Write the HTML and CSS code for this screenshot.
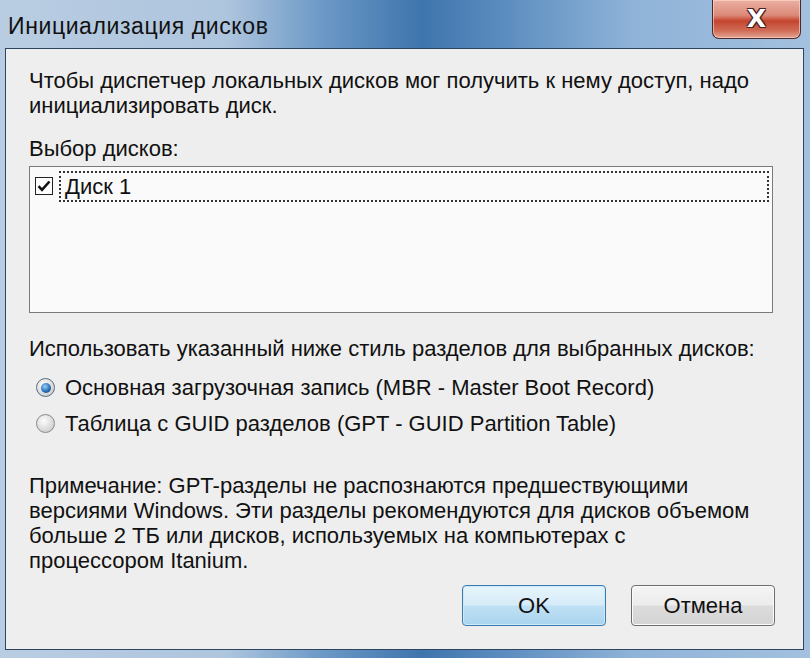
FILE: index.html
```html
<!DOCTYPE html>
<html lang="ru">
<head>
<meta charset="utf-8">
<title>Инициализация дисков</title>
<link rel="stylesheet" href="styles.css">
</head>
<body>
<div class="window">
  <div class="titlebar">
    <div class="title">Инициализация дисков</div>
    <div class="close"><span class="close-x">X</span></div>
  </div>
  <div class="client">
    <p class="intro">Чтобы диспетчер локальных дисков мог получить к нему доступ, надо<br>инициализировать диск.</p>
    <div class="label">Выбор дисков:</div>
    <div class="listbox">
      <div class="item">
        <span class="checkbox">
          <svg width="14" height="14" viewBox="0 0 14 14"><path d="M1.5 7.2 L5 10.8 L12.5 2.5" fill="none" stroke="#111" stroke-width="2.6"/></svg>
        </span>
        <span class="item-text">Диск 1</span>
      </div>
    </div>
    <div class="label style-label">Использовать указанный ниже стиль разделов для выбранных дисков:</div>
    <div class="radios">
      <div class="radio-row"><span class="radio checked"><span class="dot"></span></span><span>Основная загрузочная запись (MBR - Master Boot Record)</span></div>
      <div class="radio-row"><span class="radio"></span><span>Таблица с GUID разделов (GPT - GUID Partition Table)</span></div>
    </div>
    <p class="note">Примечание: GPT-разделы не распознаются предшествующими<br>версиями Windows. Эти разделы рекомендуются для дисков объемом<br>больше 2 ТБ или дисков, используемых на компьютерах с<br>процессором Itanium.</p>
    <div class="buttons">
      <div class="btn btn-default">OK</div>
      <div class="btn">Отмена</div>
    </div>
  </div>
</div>
</body>
</html>
```
FILE: styles.css
```css
html, body {
  margin: 0;
  padding: 0;
  width: 810px;
  height: 658px;
  overflow: hidden;
  font-family: "Liberation Sans", Arial, sans-serif;
}
.window {
  width: 810px;
  height: 658px;
  box-sizing: border-box;
  display: flex;
  flex-direction: column;
  background: linear-gradient(90deg, #b9cde2 0%, #aec5de 28%, #6b98c6 40%, #3e75ad 52%, #5b8cbf 62%, #8fb3d8 78%, #a3c0de 100%);
  padding: 0 6px 8px 5px;
}
.titlebar {
  height: 48px;
  flex: none;
  display: flex;
  align-items: flex-start;
  justify-content: space-between;
}
.title {
  font-size: 23px;
  color: #111;
  margin-top: 13px;
  margin-left: 3px;
  letter-spacing: 0.6px;
}
.close {
  width: 89px;
  height: 39px;
  margin-right: 3px;
  box-sizing: border-box;
  border: 1px solid #4a2a2a;
  border-top: none;
  border-radius: 0 0 7px 7px;
  background: linear-gradient(180deg, #eab0a2 0%, #dc8a79 40%, #c4452e 55%, #cf6b55 80%, #e4a394 100%);
  box-shadow: inset 0 0 0 1px rgba(255,220,210,0.6);
  display: flex;
  align-items: center;
  justify-content: center;
}
.close-x {
  font-family: "DejaVu Sans", sans-serif;
  font-weight: bold;
  font-size: 25px;
  color: #fff;
  text-shadow: 1px 1px 0 #4a2020, -1px -1px 0 #4a2020, 1px -1px 0 #4a2020, -1px 1px 0 #4a2020;
  margin-top: -2px;
}
.client {
  flex: 1;
  background: #eeeeee;
  border: 1px solid #2d4560;
  padding: 9px 28px 0 23px;
  font-size: 22px;
  color: #111;
  display: flex;
  flex-direction: column;
}
.intro {
  margin: 10px 0 0 0;
  line-height: 25px;
}
.label {
  margin-top: 18px;
  line-height: 25px;
}
.listbox {
  margin-top: 5px;
  height: 147px;
  width: 744px;
  box-sizing: border-box;
  background: #fafafa;
  border: 1px solid #7a7a7a;
  padding: 3px 3px 0 5px;
}
.item {
  display: flex;
  align-items: center;
  height: 32px;
}
.checkbox {
  width: 18px;
  height: 18px;
  box-sizing: border-box;
  border: 1.5px solid #222;
  background: #fff;
  display: flex;
  align-items: center;
  justify-content: center;
  flex: none;
}
.item-text {
  flex: 1;
  margin-left: 6px;
  height: 31px;
  padding-left: 4px;
  border: 2px dotted #333;
  box-sizing: border-box;
  line-height: 27px;
}
.style-label {
  margin-top: 23px;
}
.radios {
  margin-top: 14px;
  padding-left: 7px;
  display: flex;
  flex-direction: column;
  gap: 11px;
}
.radio-row {
  display: flex;
  align-items: center;
  height: 25px;
}
.radio {
  width: 19px;
  height: 19px;
  border-radius: 50%;
  box-sizing: border-box;
  border: 1px solid #8a8a8a;
  background: radial-gradient(circle at 40% 35%, #fdfdfd 0%, #dcdcdc 55%, #c4c4c4 100%);
  margin-right: 10px;
  display: flex;
  align-items: center;
  justify-content: center;
  flex: none;
}
.radio.checked {
  border-color: #5a6c80;
}
.dot {
  width: 10px;
  height: 10px;
  border-radius: 50%;
  background: radial-gradient(circle at 40% 35%, #9ad0f5 0%, #2a6fb8 55%, #0d3d78 100%);
}
.note {
  margin: 37px 0 0 0;
  line-height: 25px;
}
.buttons {
  margin-top: 12px;
  display: flex;
  justify-content: flex-end;
  gap: 25px;
}
.btn {
  width: 144px;
  height: 41px;
  box-sizing: border-box;
  border: 1px solid #6e6e6e;
  border-radius: 4px;
  background: linear-gradient(180deg, #f4f4f4 0%, #ececec 48%, #dcdcdc 52%, #d4d4d4 100%);
  box-shadow: inset 0 0 0 1px #fbfbfb;
  display: flex;
  align-items: center;
  justify-content: center;
  font-size: 22px;
}
.btn-default {
  border-color: #3b7bb0;
  background: linear-gradient(180deg, #e6f4fc 0%, #d6ecf8 48%, #bfe0f4 52%, #a9d4ee 100%);
  box-shadow: inset 0 0 0 1px #cdeaf8;
}
```
